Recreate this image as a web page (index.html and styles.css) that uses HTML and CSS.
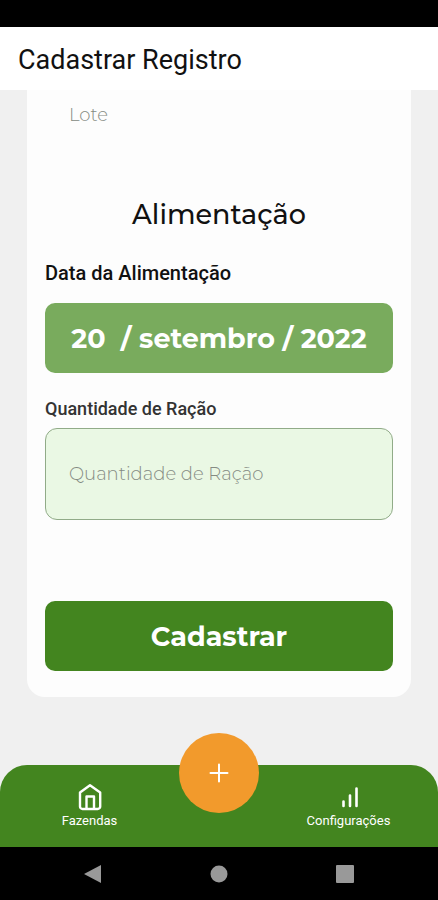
FILE: index.html
```html
<!DOCTYPE html>
<html lang="pt-BR">
<head>
<meta charset="utf-8">
<meta name="viewport" content="width=device-width, initial-scale=1">
<title>Cadastrar Registro</title>
<link rel="stylesheet" href="styles.css">
</head>
<body>
<div class="status-bar"></div>
<header class="app-header"><h1 class="app-title">Cadastrar Registro</h1></header>
<main class="content">
  <form class="card">
    <input class="field field-plain" type="text" placeholder="Lote" aria-label="Lote">
    <h2 class="section-title">Alimentação</h2>
    <label class="label label-date" for="data">Data da Alimentação</label>
    <button class="button button-date" id="data" type="button">20  / setembro / 2022</button>
    <label class="label label-amount" for="racao">Quantidade de Ração</label>
    <input class="field field-boxed" id="racao" type="text" placeholder="Quantidade de Ração">
    <button class="button button-submit" type="submit">Cadastrar</button>
  </form>
</main>
<nav class="tab-bar">
  <a class="tab" href="#fazendas">
    <svg class="tab-icon" viewBox="0 0 28 28" fill="none" stroke="currentColor" stroke-width="2.400" stroke-linejoin="round" aria-hidden="true">
      <path d="M4 9.500 14 2.200l10.200 7.300V23.500a2.500 2.500 0 0 1-2.500 2.500H6.500A2.500 2.500 0 0 1 4 23.500z"/>
      <path d="M10.500 26V13.500h7.500V26"/>
    </svg>
    <span>Fazendas</span>
  </a>
  <button class="add-button" type="button" aria-label="Adicionar">
    <svg class="add-icon" viewBox="0 0 20 20" fill="none" stroke="currentColor" stroke-width="2" stroke-linecap="round" aria-hidden="true"><path d="M10 1.500v17M1.500 10h17"/></svg>
  </button>
  <a class="tab" href="#configuracoes">
    <svg class="tab-icon" viewBox="0 0 28 28" fill="none" stroke="currentColor" stroke-width="2.600" stroke-linecap="round" aria-hidden="true"><path d="M8.500 18.500V23M15 12.500V23M21.500 5.500V23"/></svg>
    <span>Configurações</span>
  </a>
</nav>
<div class="system-bar">
  <button class="system-button" type="button" aria-label="Voltar"><svg class="system-icon" viewBox="0 0 20 20" aria-hidden="true"><path d="M18 1v18L1 10z"/></svg></button>
  <button class="system-button" type="button" aria-label="Início"><svg class="system-icon" viewBox="0 0 20 20" aria-hidden="true"><circle cx="10" cy="10" r="8.500"/></svg></button>
  <button class="system-button" type="button" aria-label="Recentes"><svg class="system-icon" viewBox="0 0 20 20" aria-hidden="true"><rect x="1" y="1" width="18" height="18" rx="1"/></svg></button>
</div>
</body>
</html>
```
FILE: styles.css
```css
* { box-sizing: border-box; }
body {
  display: flex;
  flex-direction: column;
  min-height: 100vh;
  margin: 0;
  background: #f0f0f0;
  color: #111;
  font-family: Roboto, sans-serif;
}
button, input { font-family: Montserrat, Inter, sans-serif; }
button { padding: 0; border: 0; cursor: pointer; }
.status-bar { height: 27px; background: #000; }
.app-header { padding: 17px 18px 14px; background: #fff; }
.app-title { margin: 0; font-size: 27px; line-height: 32px; font-weight: 400; }
.content { flex: 1; padding: 0 27px 68px; }
.card {
  display: flex;
  flex-direction: column;
  padding: 0 18px 26px;
  border-radius: 0 0 18px 18px;
  background: #fdfdfd;
}
.field {
  width: 100%;
  padding: 0 23px;
  border: 1px solid transparent;
  border-radius: 12px;
  background: transparent;
  font-size: 18px;
  font-weight: 300;
}
.field::placeholder { color: #858b83; opacity: 1; }
.field-plain { height: 50px; }
.field-boxed { height: 92px; border-color: #91ab88; background: #eaf8e4; }
.section-title {
  margin: 59px 0 30px;
  font-family: Montserrat, Inter, sans-serif;
  font-size: 27px;
  line-height: 32px;
  font-weight: 500;
  text-align: center;
}
.label { line-height: 24px; font-weight: 500; }
.label-date { margin-bottom: 18px; font-size: 20px; }
.label-amount { margin: 24px 0 7px; color: #333; font-size: 18px; }
.button {
  width: 100%;
  height: 70px;
  border-radius: 10px;
  color: #fff;
  font-size: 27px;
  font-weight: 700;
  white-space: pre;
}
.button-date { background: #79ab5d; }
.button-submit { margin-top: 81px; background: #43851f; }
.tab-bar {
  display: grid;
  grid-template-columns: 1fr 80px 1fr;
  height: 82px;
  border-radius: 27px 27px 0 0;
  background: #43851f;
}
.tab {
  display: flex;
  flex-direction: column;
  align-items: center;
  padding-top: 18px;
  color: #fff;
  font-size: 13px;
  line-height: 20px;
  text-decoration: none;
}
.tab-icon { width: 28px; height: 28px; }
.add-button {
  display: flex;
  align-items: center;
  justify-content: center;
  width: 80px;
  height: 80px;
  margin-top: -32px;
  border-radius: 50%;
  background: #f29a2c;
  color: #fff;
}
.add-icon { width: 20px; height: 20px; }
.system-bar {
  display: flex;
  justify-content: space-around;
  height: 53px;
  padding: 0 30px;
  background: #000;
}
.system-button { display: flex; align-items: center; justify-content: center; width: 22px; background: none; }
.system-icon { width: 20px; height: 20px; fill: #999; }
```
